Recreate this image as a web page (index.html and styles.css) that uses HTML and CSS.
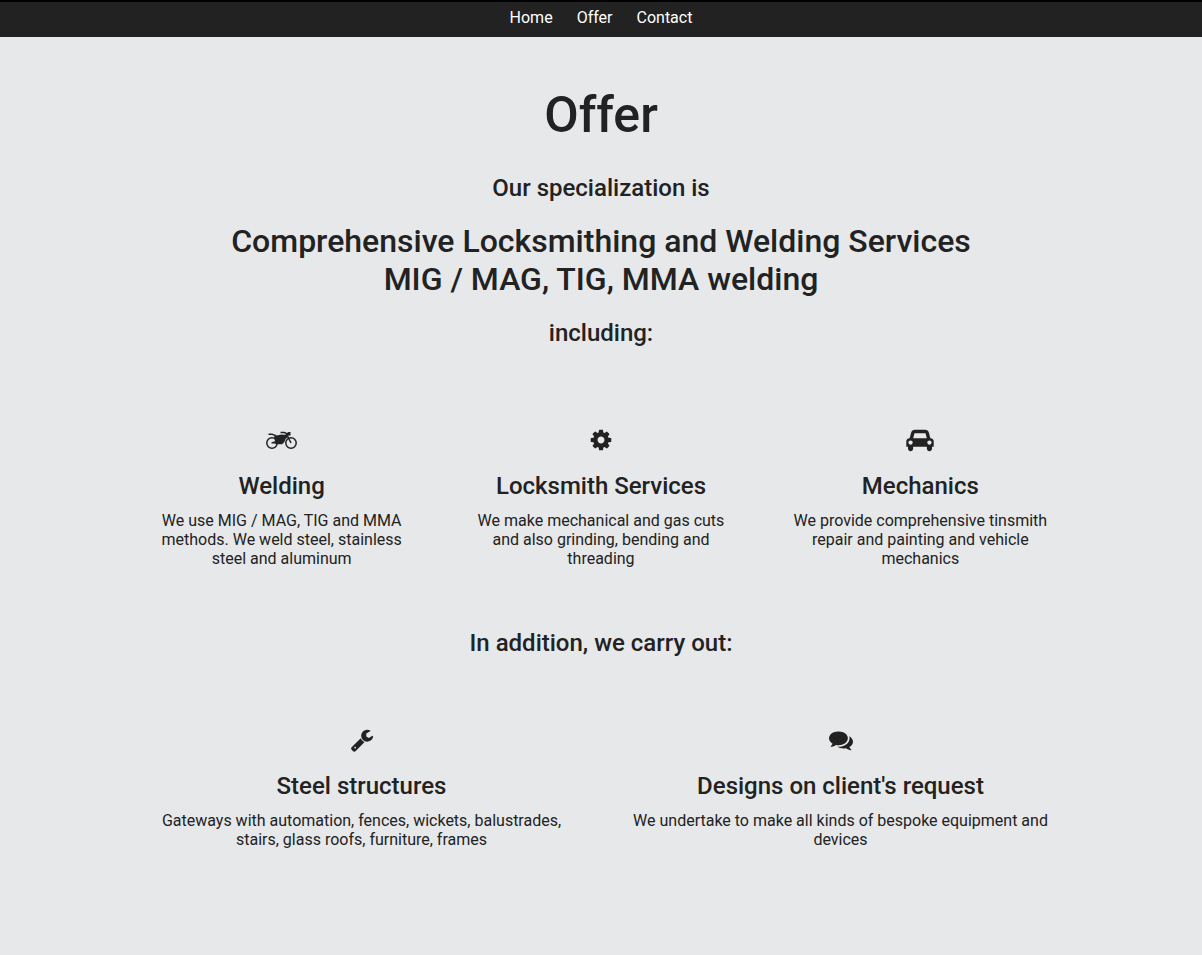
FILE: index.html
```html
<!DOCTYPE html>
<html lang="en">
<head>
<meta charset="utf-8">
<meta name="viewport" content="width=device-width, initial-scale=1">
<title>Offer</title>
<link rel="stylesheet" href="styles.css">
</head>
<body>
<nav class="nav">
  <a href="#home">Home</a>
  <a href="#offer">Offer</a>
  <a href="#contact">Contact</a>
</nav>
<main class="page" id="offer">
  <h1 class="title">Offer</h1>
  <h3 class="lead">Our specialization is</h3>
  <h2 class="services">Comprehensive Locksmithing and Welding Services<br>MIG / MAG, TIG, MMA welding</h2>
  <h3 class="lead">including:</h3>
  <section class="row">
    <article class="card">
      <svg class="icon icon-moto" viewBox="0 0 31 24" aria-hidden="true">
        <g fill="none" stroke="currentColor">
          <circle cx="6" cy="15" r="5.200" stroke-width="1.500"/>
          <circle cx="25" cy="15" r="5.200" stroke-width="1.500"/>
          <path d="M25 15L20.500 6" stroke-width="1.500"/>
          <path d="M14.500 4.600h4l3 1.600M2.500 6.200h3.500l4 1.400" stroke-width="1.500"/>
          <path d="M17.500 14.500q.5-4 4-6" stroke-width="1.300"/>
        </g>
        <path d="M8 8.500Q10 7 12 7.200q3.500-1.200 5.500-.4l3.500-.4 1 1.800-3.500 2.800-1 4-1.500 1.200H10l-1-.7H5.500v-1.200l3.500-1z"/>
        <path d="M20 5.500l2.500-1.500h2v3.500l-3 .3z"/>
      </svg>
      <h3 class="card-title">Welding</h3>
      <p class="text">We use MIG / MAG, TIG and MMA methods. We weld steel, stainless steel and aluminum</p>
    </article>
    <article class="card">
      <svg class="icon" viewBox="0 0 1792 1792" aria-hidden="true"><path d="M1152 896q0-106-75-181t-181-75-181 75-75 181 75 181 181 75 181-75 75-181zm512-109v222q0 12-8 23t-20 13l-185 28q-19 54-39 91 35 50 107 138 10 12 10 25t-9 23q-27 37-99 108t-94 71q-12 0-26-9l-138-108q-44 23-91 38-16 136-29 186-7 28-36 28h-222q-14 0-24.500-8.500t-11.500-21.500l-28-184q-49-16-90-37l-141 107q-10 9-25 9-14 0-25-11-126-114-165-168-7-10-7-23 0-12 8-23 15-21 51-66.500t54-70.500q-27-50-41-99l-183-27q-13-2-21-12.500t-8-23.500v-222q0-12 8-23t19-13l186-28q14-46 39-92-40-57-107-138-10-12-10-24 0-10 9-23 26-36 98.500-107.500t94.500-71.500q13 0 26 10l138 107q44-23 91-38 16-136 29-186 7-28 36-28h222q14 0 24.500 8.500t11.500 21.500l28 184q49 16 90 37l142-107q9-9 24-9 13 0 25 10 129 119 165 170 7 8 7 22 0 12-8 23-15 21-51 66.500t-54 70.500q26 50 41 98l183 28q13 2 21 12.500t8 23.500z"/></svg>
      <h3 class="card-title">Locksmith Services</h3>
      <p class="text">We make mechanical and gas cuts and also grinding, bending and threading</p>
    </article>
    <article class="card">
      <svg class="icon icon-car" viewBox="0 0 2048 1792" aria-hidden="true"><path d="M480 1088q0-66-47-113t-113-47-113 47-47 113 47 113 113 47 113-47 47-113zm36-320h1016l-89-357q-2-8-14-17.500t-21-9.500h-768q-9 0-21 9.500t-14 17.500zm1372 320q0-66-47-113t-113-47-113 47-47 113 47 113 113 47 113-47 47-113zm160-96v384q0 14-9 23t-23 9h-96v128q0 80-56 136t-136 56-136-56-56-136v-128h-1024v128q0 80-56 136t-136 56-136-56-56-136v-128h-96q-14 0-23-9t-9-23v-384q0-93 65.500-158.500t158.500-65.500h28l105-419q23-94 104-157.500t179-63.500h768q98 0 179 63.500t104 157.500l105 419h28q93 0 158.500 65.500t65.500 158.500z"/></svg>
      <h3 class="card-title">Mechanics</h3>
      <p class="text">We provide comprehensive tinsmith repair and painting and vehicle mechanics</p>
    </article>
  </section>
  <h3 class="lead">In addition, we carry out:</h3>
  <section class="row row-extra">
    <article class="card">
      <svg class="icon" viewBox="0 0 1792 1792" aria-hidden="true"><path d="M448 1472q0-26-19-45t-45-19-45 19-19 45 19 45 45 19 45-19 19-45zm644-420l-682 682q-37 37-90 37-52 0-91-37l-106-108q-38-36-38-90 0-53 38-91l681-681q39 98 114.500 173.500t173.500 114.500zm634-435q0 39-23 106-47 134-164.500 217.500t-258.500 83.500q-185 0-316.500-131.500t-131.500-316.500 131.500-316.500 316.500-131.500q58 0 121.500 16.500t107.500 46.500q16 11 16 28t-16 28l-293 169v224l193 107q5-3 79-48.500t135.500-81 70.500-35.500q15 0 23.500 10t8.500 25z"/></svg>
      <h3 class="card-title">Steel structures</h3>
      <p class="text">Gateways with automation, fences, wickets, balustrades, stairs, glass roofs, furniture, frames</p>
    </article>
    <article class="card">
      <svg class="icon" viewBox="0 0 1792 1792" aria-hidden="true"><path d="M1408 768q0 139-94 257t-256.500 186.500-353.500 68.500q-86 0-176-16-124 88-278 128-36 9-86 16h-3q-11 0-20.500-8t-11.500-21q-1-3-1-6.500t.5-6.500 2-6l2.500-5 3.500-5.500 4-5 4.500-5 4-4.500q5-6 23-25t26-29.500 22.500-29 25-38.500 20.500-44q-124-72-195-177t-71-224q0-139 94-257t256.500-186.500 353.500-68.500 353.500 68.500 256.500 186.500 94 257zm384 256q0 120-71 224.500t-195 176.500q10 24 20.500 44t25 38.500 22.500 29 26 29.500 23 25q1 1 4 4.500t4.500 5 4 5 3.500 5.500l2.500 5 2 6 .5 6.500-1 6.500q-3 14-13 22t-22 7q-50-7-86-16-154-40-278-128-90 16-176 16-271 0-472-132 58 4 88 4 161 0 309-45t264-129q125-92 192-212t67-254q0-77-23-152 129 71 204 178t75 230z"/></svg>
      <h3 class="card-title">Designs on client's request</h3>
      <p class="text">We undertake to make all kinds of bespoke equipment and devices</p>
    </article>
  </section>
</main>
</body>
</html>
```
FILE: styles.css
```css
* { box-sizing: border-box; }
body {
  margin: 0;
  min-height: 100vh;
  background: #e6e8ea;
  color: #222;
  font-family: Roboto, "Liberation Sans", sans-serif;
  font-size: 16px;
  line-height: 19px;
  text-align: center;
}
h1, h2, h3, p { margin: 0; font-weight: 500; }
.nav {
  display: flex;
  justify-content: center;
  gap: 24px;
  padding: 6px 0 10px;
  background: #222;
  border-top: 2px solid #000;
}
.nav a { color: #fff; text-decoration: none; }
.page { max-width: 958px; margin: 0 auto; padding-top: 48px; }
.title { font-size: 50px; line-height: 60px; margin-bottom: 28px; }
.lead, .card-title { font-size: 24px; line-height: 30px; }
.services { font-size: 32px; line-height: 38px; margin: 19px 0 20px; }
.row { display: flex; padding: 80px 0 60px; }
.row-extra { padding-top: 70px; }
.card { flex: 1; padding: 0 24px; }
.icon { display: block; width: 24px; height: 24px; margin: 0 auto 19px; fill: currentColor; }
.icon-moto { width: 31px; }
.icon-car { width: 28px; }
.card-title { margin-bottom: 10px; }
.text { font-weight: 400; }
```
